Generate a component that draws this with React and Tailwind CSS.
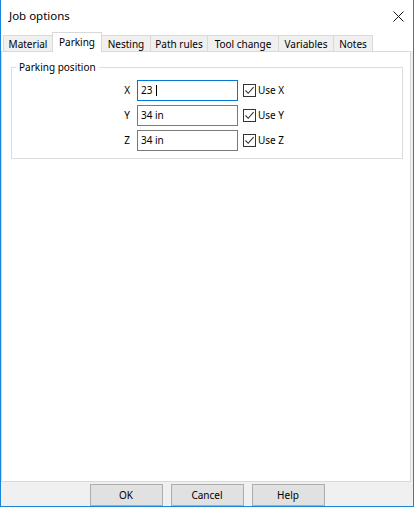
const tabs = [
  { label: 'Material', w: 'w-[50px]' },
  { label: 'Parking', w: 'w-[50px]', active: true },
  { label: 'Nesting', w: 'w-[50px]' },
  { label: 'Path rules', w: 'w-[58px]' },
  { label: 'Tool change', w: 'w-[72px]' },
  { label: 'Variables', w: 'w-[56px]' },
  { label: 'Notes', w: 'w-[40px]' },
];

const rows = [
  { axis: 'X', value: '23', focused: true },
  { axis: 'Y', value: '34 in' },
  { axis: 'Z', value: '34 in' },
];

function CheckBox() {
  return (
    <span className="flex h-[13px] w-[13px] items-center justify-center border border-[#333333] bg-white">
      <svg width="11" height="11" viewBox="0 0 11 11">
        <path d="M1.5 5.5 L4.2 8.3 L9.6 2.2" fill="none" stroke="#333333" strokeWidth="1.1" />
      </svg>
    </span>
  );
}

export default function App() {
  return (
    <div className="flex h-[507px] w-[414px] flex-col border-x border-b border-[#1883d7] bg-[#f0f0f0] font-['Noto_Sans',sans-serif] text-[10px] text-black">
      <div className="flex h-[32px] items-center justify-between bg-white pl-[8px] pr-[9px]">
        <span className="text-[11.5px]">Job options</span>
        <svg width="11" height="11" viewBox="0 0 11 11">
          <path d="M0.5 0.5 L10.5 10.5 M10.5 0.5 L0.5 10.5" stroke="#111111" strokeWidth="1" />
        </svg>
      </div>

      <div className="flex h-[19px] items-end bg-white pl-[2px]">
        {tabs.map((t, i) => (
          <div
            key={t.label}
            className={
              t.active
                ? `relative z-10 -mb-px flex h-[20px] ${t.w} -ml-px items-start justify-center border-x border-t border-[#d9d9d9] bg-white pt-[2px]`
                : `flex h-[16px] ${t.w} ${i > 0 ? '-ml-px' : ''} items-center justify-center border-x border-t border-[#d9d9d9] bg-[#f0f0f0] pt-[1px]`
            }
          >
            {t.label}
          </div>
        ))}
      </div>

      <div className="mr-[2px] flex-1 border border-[#d9d9d9] bg-white">
        <fieldset className="mt-[8px] ml-[9px] mr-[7px] border border-[#dcdcdc] pb-[7px]">
          <legend className="ml-[4px] px-[3px] leading-[14px]">Parking position</legend>
          <div className="flex flex-col gap-[4px] pt-[6px]">
            {rows.map((r) => (
              <div key={r.axis} className="flex h-[21px] items-center">
                <span className="w-[119px] pr-[1px] text-right">{r.axis}</span>
                <div
                  className={`ml-[6px] flex h-[21px] w-[101px] items-center border pl-[3px] ${
                    r.focused ? 'border-[#0078d7]' : 'border-[#7a7a7a]'
                  }`}
                >
                  <span>{r.value}</span>
                  {r.focused && <span className="ml-[4px] h-[11px] w-px bg-black" />}
                </div>
                <span className="ml-[5px]">
                  <CheckBox />
                </span>
                <span className="ml-[2px]">Use {r.axis}</span>
              </div>
            ))}
          </div>
        </fieldset>
      </div>

      <div className="flex h-[24px] justify-center gap-[8px] pt-[2px]">
        {['OK', 'Cancel', 'Help'].map((b) => (
          <button
            key={b}
            className="flex h-[22px] w-[73px] items-center justify-center border border-[#adadad] bg-[#e1e1e1]"
          >
            {b}
          </button>
        ))}
      </div>
    </div>
  );
}
